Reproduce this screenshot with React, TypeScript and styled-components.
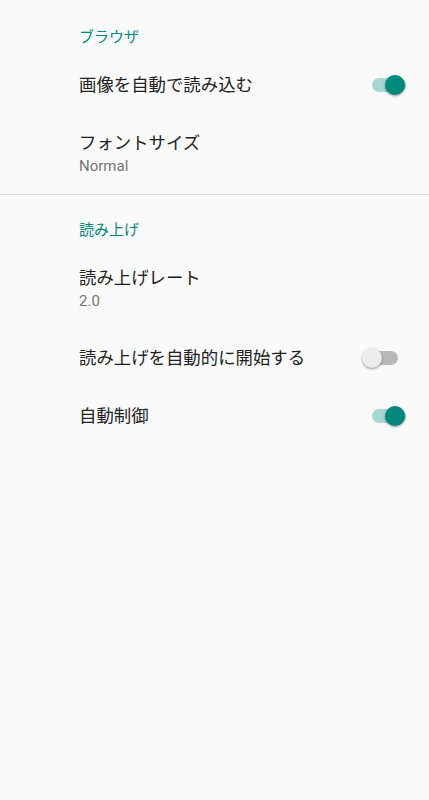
import React from 'react';
import styled, { createGlobalStyle } from 'styled-components';

const GlobalStyle = createGlobalStyle`
    html, body {
        margin: 0;
        padding: 0;
        background: #fafafa;
    }
    body {
        font-family: Roboto, "Noto Sans CJK JP", sans-serif;
        -webkit-font-smoothing: antialiased;
    }
`;

const Screen = styled.div`
    width: 429px;
    min-height: 800px;
    background: #fafafa;
`;

const Category = styled.section<{ $first?: boolean }>`
    padding-top: ${(p) => (p.$first ? '27px' : '25px')};
    & + & {
        border-top: 1px solid rgba(0, 0, 0, 0.12);
    }
`;

const CategoryTitle = styled.div`
    padding: 0 0 9px 79px;
    font-size: 15px;
    line-height: 20px;
    color: #00897b;
`;

const Row = styled.div`
    display: flex;
    align-items: center;
    padding: 17px 23px 17px 79px;
`;

const RowText = styled.div`
    flex: 1;
    display: flex;
    flex-direction: column;
`;

const Title = styled.div`
    font-size: 17.4px;
    line-height: 24px;
    color: #212121;
`;

const Summary = styled.div`
    font-size: 15px;
    line-height: 22px;
    color: #757575;
`;

const SwitchBox = styled.div`
    position: relative;
    width: 44px;
    height: 20px;
    flex-shrink: 0;
`;

const Track = styled.div<{ $on: boolean }>`
    position: absolute;
    top: 3px;
    left: ${(p) => (p.$on ? '10px' : '2px')};
    width: 34px;
    height: 14px;
    border-radius: 7px;
    background: ${(p) => (p.$on ? '#a6d7d2' : '#b9b9b9')};
`;

const Thumb = styled.div<{ $on: boolean }>`
    position: absolute;
    top: 0;
    left: ${(p) => (p.$on ? '23px' : '0')};
    width: 20px;
    height: 20px;
    border-radius: 50%;
    background: ${(p) => (p.$on ? '#00897b' : '#ececec')};
    box-shadow: 0 1px 2px rgba(0, 0, 0, 0.3), 0 1px 3px rgba(0, 0, 0, 0.15);
`;

const Switch: React.FC<{ on: boolean }> = ({ on }) => (
    <SwitchBox>
        <Track $on={on} />
        <Thumb $on={on} />
    </SwitchBox>
);

interface IPref {
    title: string;
    summary?: string;
    toggle?: boolean;
}

const sections: { title: string; items: IPref[] }[] = [
    {
        title: 'ブラウザ',
        items: [
            { title: '画像を自動で読み込む', toggle: true },
            { title: 'フォントサイズ', summary: 'Normal' },
        ],
    },
    {
        title: '読み上げ',
        items: [
            { title: '読み上げレート', summary: '2.0' },
            { title: '読み上げを自動的に開始する', toggle: false },
            { title: '自動制御', toggle: true },
        ],
    },
];

const App: React.FC = () => {
    return (
        <Screen>
            <GlobalStyle />
            {sections.map((section, i) => (
                <Category key={section.title} $first={i === 0}>
                    <CategoryTitle>{section.title}</CategoryTitle>
                    {section.items.map((item) => (
                        <Row key={item.title}>
                            <RowText>
                                <Title>{item.title}</Title>
                                {item.summary && <Summary>{item.summary}</Summary>}
                            </RowText>
                            {item.toggle !== undefined && <Switch on={item.toggle} />}
                        </Row>
                    ))}
                </Category>
            ))}
        </Screen>
    );
};

export default App;
